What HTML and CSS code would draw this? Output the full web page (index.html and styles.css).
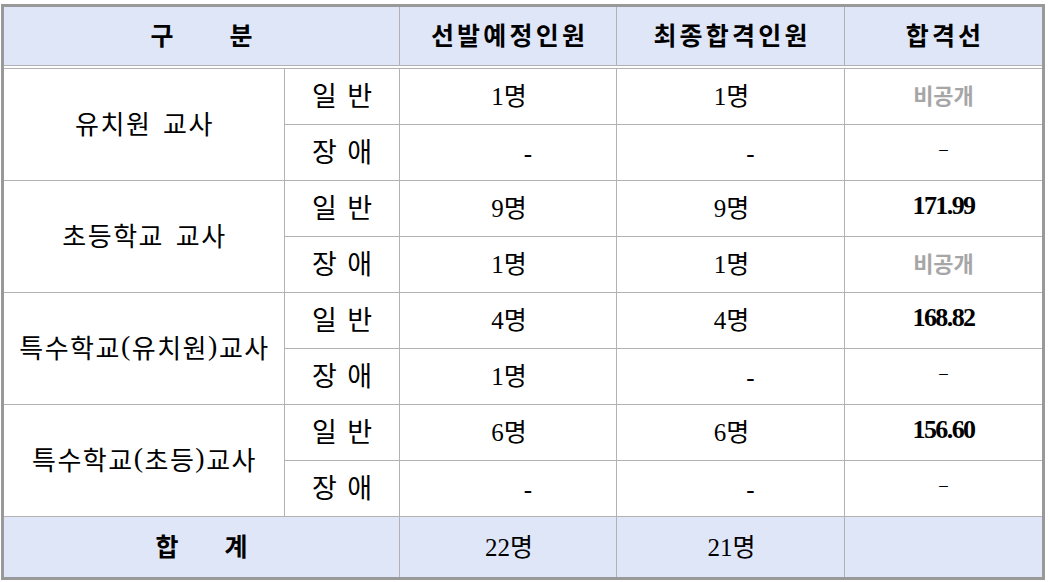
FILE: index.html
```html
<!DOCTYPE html>
<html lang="ko">
<head>
<meta charset="utf-8">
<link rel="stylesheet" href="styles.css">
</head>
<body>
<div class="tbl">
  <div class="c h span2 pair"><span>구</span><span>분</span></div>
  <div class="c h">선발예정인원</div>
  <div class="c h">최종합격인원</div>
  <div class="c h">합격선</div>
  <div class="sep"></div>

  <div class="c lbl r2">유치원 교사</div>
  <div class="c sub">일 반</div>
  <div class="c num">1명</div>
  <div class="c num">1명</div>
  <div class="c priv">비공개</div>
  <div class="c sub">장 애</div>
  <div class="c dash">-</div>
  <div class="c dash">-</div>
  <div class="c ndash">–</div>

  <div class="c lbl r2">초등학교 교사</div>
  <div class="c sub">일 반</div>
  <div class="c num">9명</div>
  <div class="c num">9명</div>
  <div class="c score">171.99</div>
  <div class="c sub">장 애</div>
  <div class="c num">1명</div>
  <div class="c num">1명</div>
  <div class="c priv">비공개</div>

  <div class="c lbl r2">특수학교<span class="p">(</span>유치원<span class="p">)</span>교사</div>
  <div class="c sub">일 반</div>
  <div class="c num">4명</div>
  <div class="c num">4명</div>
  <div class="c score">168.82</div>
  <div class="c sub">장 애</div>
  <div class="c num">1명</div>
  <div class="c dash">-</div>
  <div class="c ndash">–</div>

  <div class="c lbl r2">특수학교<span class="p">(</span>초등<span class="p">)</span>교사</div>
  <div class="c sub">일 반</div>
  <div class="c num">6명</div>
  <div class="c num">6명</div>
  <div class="c score">156.60</div>
  <div class="c sub">장 애</div>
  <div class="c dash">-</div>
  <div class="c dash">-</div>
  <div class="c ndash">–</div>

  <div class="c h span2 pair total"><span>합</span><span>계</span></div>
  <div class="c num ft">22명</div>
  <div class="c num ft">21명</div>
  <div class="c ft"></div>
</div>
</body>
</html>
```
FILE: styles.css
```css
html, body {
  background: #ffffff;
}
body {
  margin: 4px 0 0 1px;
  font-family: "Liberation Serif", "Noto Sans CJK KR", serif;
  color: #000000;
}
.tbl {
  display: grid;
  width: max-content;
  grid-template-columns: 280px 114px 216px 227px 197px;
  grid-template-rows: 58px 2px repeat(8, 55px) 60px;
  gap: 1px;
  background: #b2b2b2;
  border: 3px solid #999999;
}
.c {
  background: #ffffff;
  display: flex;
  align-items: center;
  justify-content: center;
  font-size: 24px;
  white-space: nowrap;
  padding-bottom: 5px;
}
.sep {
  grid-column: 1 / -1;
  background: #ffffff;
}
.h {
  background: #dfe6f7;
  font-family: "Noto Sans CJK KR", sans-serif;
  font-weight: 700;
  font-size: 25px;
  letter-spacing: 3.2px;
  padding-left: 3px;
}
.span2 {
  grid-column: span 2;
}
.pair {
  gap: 56px;
  letter-spacing: 0;
  padding-left: 0;
}
.total {
  gap: 46px;
}
.r2 {
  grid-row: span 2;
}
.lbl {
  font-family: "Noto Sans CJK KR", sans-serif;
  font-weight: 400;
  font-size: 26px;
  letter-spacing: 1.5px;
  word-spacing: 3px;
  padding-left: 1px;
}
.lbl .p {
  font-family: "Liberation Serif", serif;
  font-size: 28px;
  letter-spacing: 1.5px;
}
.sub {
  font-family: "Noto Sans CJK KR", sans-serif;
  font-size: 27px;
  word-spacing: 3px;
}
.num {
  font-size: 25px;
  padding-left: 2px;
}
.dash {
  font-size: 25px;
  padding: 2px 0 0 40px;
}
.ndash {
  font-size: 17px;
  padding-bottom: 8px;
}
.score {
  font-weight: 700;
  font-size: 26px;
  letter-spacing: -1.6px;
}
.priv {
  font-family: "Noto Sans CJK KR", sans-serif;
  font-size: 22px;
  font-weight: 700;
  color: #a6a6a6;
}
.ft {
  background: #dfe6f7;
}
```
